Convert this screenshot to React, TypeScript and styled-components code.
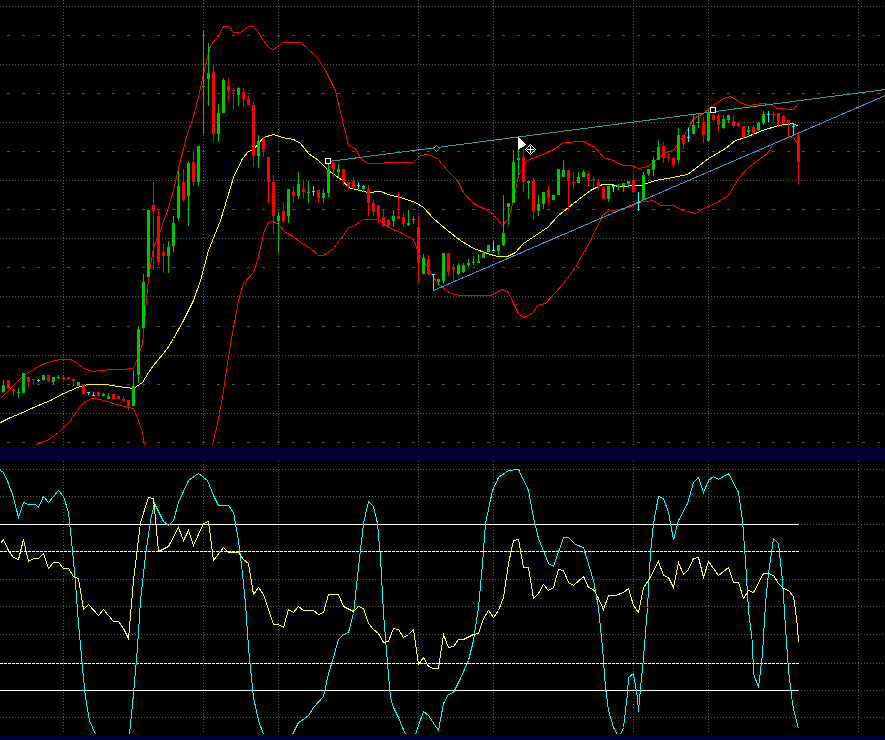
import React from "react";
import styled, { createGlobalStyle } from "styled-components";

type Pt = [number, number];
// wick top, wick bottom, body top, body bottom, colour (g / r / c), one per bar, 5px apart from x=3
type Bar = [number, number, number, number, string];

const GlobalStyle = createGlobalStyle`
  html, body {
    margin: 0;
    padding: 0;
    background: #000;
  }
`;

const Page = styled.div`
  display: flex;
  flex-direction: column;
  width: 885px;
  height: 740px;
  overflow: hidden;
  background: #000;
`;

const PricePane = styled.div`
  height: 445px;
  padding-bottom: 2px;
  background: #000;
`;

const Splitter = styled.div<{ $height: number }>`
  height: ${(p) => p.$height}px;
  background: #000037;
`;

const OscillatorPane = styled.div`
  height: 273px;
  padding-bottom: 2px;
  background: #000;
`;

const ChartSvg = styled.svg`
  display: block;
  shape-rendering: crispEdges;
`;

const Series = styled.polyline<{ $color: string }>`
  fill: none;
  stroke: ${(p) => p.$color};
  stroke-width: 1;
`;

const GridLine = styled.line<{ $sparse?: boolean }>`
  stroke: ${(p) => (p.$sparse ? "#505050" : "#5a5a5a")};
  stroke-width: 1;
  stroke-dasharray: ${(p) => (p.$sparse ? "3 12" : "1 2")};
  stroke-dashoffset: ${(p) => (p.$sparse ? -7 : 0)};
`;

const LevelLine = styled.line<{ $dashed?: boolean }>`
  stroke: #fff;
  stroke-width: 1;
  stroke-dasharray: ${(p) => (p.$dashed ? "3 1" : "none")};
`;

const COLORS: Record<string, string> = { g: "#00c800", r: "#ff0000", c: "#00ffff" };
const TREND_TEAL = "#359fa0";
const TREND_BLUE = "#3a97d0";

const GRID_X = [63, 203, 278, 418, 493, 633, 708, 858];
const PRICE_DOTTED = [6, 64, 122, 180, 238, 296, 355, 413];
const PRICE_SPARSE = [35, 93, 151, 209, 267, 326, 384, 442];
const OSC_GRID = [469, 496, 524, 551, 579, 606, 634, 663, 690, 717];

const BARS: Bar[] = [
  [380, 393, 385, 392, "g"], [380, 389, 380, 388, "r"], [388, 396, 389, 391, "r"], [388, 398, 392, 393, "g"],
  [373, 393, 373, 393, "g"], [377, 387, 377, 382, "r"], [379, 385, 379, 380, "r"], [379, 382, 380, 380, "c"],
  [375, 381, 375, 380, "g"], [375, 382, 375, 381, "r"], [377, 384, 377, 382, "g"], [375, 379, 377, 377, "g"],
  [376, 380, 377, 379, "r"], [377, 380, 377, 379, "r"], [378, 386, 379, 381, "r"], [382, 386, 382, 386, "g"],
  [385, 394, 385, 394, "r"], [392, 395, 392, 392, "c"], [392, 395, 395, 395, "c"], [392, 396, 392, 396, "r"],
  [393, 396, 394, 396, "g"], [393, 399, 396, 399, "g"], [394, 399, 394, 399, "r"], [396, 399, 396, 399, "r"],
  [396, 402, 399, 401, "r"], [400, 410, 400, 406, "r"], [370, 406, 386, 406, "g"], [326, 383, 329, 375, "g"],
  [274, 328, 282, 328, "g"], [210, 277, 210, 277, "g"], [182, 270, 205, 211, "r"], [209, 265, 216, 262, "r"],
  [244, 273, 252, 256, "r"], [241, 273, 247, 256, "g"], [216, 252, 223, 246, "g"], [171, 221, 186, 218, "g"],
  [169, 202, 182, 200, "r"], [161, 226, 163, 196, "g"], [151, 186, 162, 182, "r"], [146, 186, 146, 182, "g"],
  [31, 134, 86, 86, "g"], [43, 106, 73, 79, "g"], [64, 142, 72, 134, "r"], [104, 142, 113, 134, "g"],
  [78, 113, 80, 113, "g"], [78, 101, 86, 91, "r"], [88, 109, 90, 91, "r"], [87, 106, 88, 95, "g"],
  [88, 107, 92, 99, "r"], [95, 105, 99, 105, "r"], [102, 167, 105, 156, "r"], [135, 168, 141, 156, "g"],
  [137, 157, 139, 150, "r"], [157, 203, 157, 182, "r"], [175, 234, 182, 216, "r"], [212, 252, 216, 221, "g"],
  [202, 223, 211, 221, "r"], [189, 223, 189, 216, "g"], [186, 203, 192, 196, "r"], [172, 199, 184, 196, "g"],
  [180, 198, 189, 192, "r"], [181, 203, 192, 192, "g"], [186, 196, 191, 191, "c"], [190, 203, 190, 198, "r"],
  [189, 203, 193, 198, "g"], [164, 197, 169, 193, "g"], [162, 178, 162, 169, "r"], [164, 177, 169, 172, "g"],
  [169, 186, 169, 182, "r"], [182, 190, 182, 187, "r"], [177, 190, 181, 187, "r"], [182, 189, 185, 185, "c"],
  [185, 192, 186, 189, "g"], [185, 216, 189, 203, "r"], [199, 216, 203, 212, "r"], [205, 223, 205, 217, "r"],
  [210, 227, 217, 226, "r"], [219, 227, 220, 226, "r"], [210, 227, 216, 221, "g"], [192, 219, 216, 219, "r"],
  [213, 227, 217, 224, "r"], [210, 226, 223, 225, "g"], [216, 224, 219, 219, "g"], [216, 283, 227, 263, "r"],
  [254, 274, 258, 274, "g"], [255, 275, 259, 274, "r"], [274, 290, 274, 274, "c"], [279, 285, 279, 282, "g"],
  [253, 284, 253, 281, "g"], [253, 276, 253, 272, "r"], [264, 281, 267, 270, "r"], [263, 275, 265, 274, "g"],
  [263, 273, 265, 272, "g"], [259, 267, 263, 265, "g"], [256, 265, 262, 262, "g"], [254, 263, 261, 263, "g"],
  [251, 258, 253, 258, "g"], [245, 252, 245, 252, "g"], [241, 251, 250, 250, "c"], [245, 255, 245, 251, "g"],
  [195, 246, 233, 245, "g"], [203, 225, 203, 207, "g"], [150, 203, 162, 203, "g"], [150, 175, 158, 160, "g"],
  [148, 192, 157, 182, "r"], [181, 199, 181, 183, "g"], [178, 220, 181, 211, "r"], [195, 216, 204, 211, "g"],
  [192, 209, 192, 204, "g"], [186, 205, 190, 198, "r"], [195, 200, 195, 200, "g"], [169, 195, 169, 195, "g"],
  [160, 177, 170, 177, "g"], [170, 211, 170, 181, "r"], [172, 189, 182, 182, "r"], [172, 183, 177, 183, "g"],
  [170, 177, 172, 177, "g"], [171, 186, 174, 181, "r"], [177, 188, 179, 179, "r"], [179, 190, 182, 187, "r"],
  [187, 199, 187, 199, "r"], [186, 202, 186, 199, "g"], [184, 192, 186, 186, "c"], [184, 190, 186, 186, "g"],
  [183, 192, 183, 186, "g"], [181, 188, 181, 184, "g"], [175, 192, 180, 192, "r"], [192, 211, 202, 202, "c"],
  [172, 200, 175, 200, "g"], [169, 176, 169, 174, "g"], [157, 176, 160, 170, "g"], [140, 160, 147, 160, "g"],
  [142, 163, 146, 158, "r"], [153, 162, 157, 157, "r"], [157, 167, 158, 165, "r"], [128, 164, 135, 160, "g"],
  [135, 148, 135, 144, "r"], [128, 142, 137, 137, "c"], [115, 134, 125, 134, "g"], [114, 128, 122, 122, "g"],
  [117, 143, 122, 135, "r"], [109, 142, 112, 141, "g"], [110, 121, 115, 120, "r"], [114, 132, 116, 125, "r"],
  [115, 129, 119, 128, "g"], [115, 123, 115, 120, "g"], [115, 128, 121, 126, "r"], [122, 127, 123, 126, "r"],
  [126, 139, 126, 137, "r"], [126, 135, 130, 132, "g"], [125, 137, 127, 133, "r"], [122, 131, 123, 130, "g"],
  [111, 125, 114, 123, "g"], [111, 122, 114, 114, "c"], [112, 120, 114, 114, "r"], [113, 127, 113, 121, "r"],
  [115, 124, 116, 123, "r"], [120, 136, 120, 123, "r"], [123, 135, 126, 126, "c"], [133, 184, 135, 162, "r"],
];

const UPPER_A: Pt[] = [
  [0, 398], [10, 388], [23, 375], [38, 366], [50, 361], [60, 359], [70, 359], [77, 363], [83, 368], [92, 371],
  [110, 369], [120, 369], [133, 368], [137, 358], [142, 343], [148, 278], [153, 248], [160, 230], [168, 207],
  [173, 190], [178, 168], [183, 148], [188, 130], [193, 117], [198, 97], [203, 73], [207, 57], [210, 45],
  [217, 37], [223, 26], [228, 26], [233, 32], [240, 32], [248, 26], [253, 26], [258, 32], [263, 40], [268, 47],
  [273, 49], [283, 42], [292, 42], [300, 42], [315, 55], [325, 70], [335, 90], [342, 120], [348, 145], [355, 148],
  [360, 158], [367, 163], [380, 163], [388, 162], [413, 162], [420, 155], [428, 154], [437, 158], [447, 170],
  [457, 180], [463, 192], [473, 203], [483, 208], [492, 213], [502, 225], [508, 218], [513, 200], [518, 175],
  [527, 160], [545, 153], [555, 148], [563, 142], [583, 141], [595, 147], [603, 157], [613, 160], [622, 165],
  [630, 165], [638, 168], [648, 166], [657, 158], [665, 152], [673, 150], [680, 140], [688, 128], [693, 118],
  [703, 113], [713, 105], [723, 98], [730, 96], [742, 103], [748, 105], [762, 103], [770, 104], [777, 108],
  [793, 109], [798, 103],
];

const LOWER_LEFT: Pt[] = [
  [36, 444], [47, 440], [58, 432], [70, 420], [77, 410], [83, 402], [92, 398], [100, 399], [113, 403],
  [128, 407], [133, 408], [138, 420], [142, 432], [144, 445],
];

const LOWER_RIGHT: Pt[] = [
  [212, 445], [217, 423], [222, 397], [227, 363], [232, 333], [238, 300], [243, 283], [253, 272], [257, 260],
  [260, 248], [263, 233], [268, 222], [273, 221], [278, 224], [285, 232], [293, 236], [300, 242], [310, 248],
  [318, 255], [323, 255], [333, 248], [343, 235], [348, 227], [353, 226], [363, 219], [378, 219], [388, 227],
  [400, 232], [413, 239], [418, 252], [427, 267], [437, 283], [450, 293], [460, 295], [490, 295], [502, 289],
  [508, 292], [513, 303], [518, 313], [523, 317], [532, 313], [537, 305], [545, 303], [563, 283], [575, 267],
  [590, 240], [602, 215], [607, 211], [628, 207], [638, 202], [653, 200], [660, 205], [673, 205], [682, 210],
  [695, 213], [703, 208], [715, 203], [728, 195], [738, 178], [748, 167], [767, 153], [773, 143], [787, 137],
  [793, 137], [798, 145],
];

const MIDDLE: Pt[] = [
  [0, 422], [10, 417], [20, 413], [33, 407], [50, 400], [63, 393], [77, 387], [87, 384], [105, 384], [118, 386],
  [133, 388], [142, 382], [148, 372], [153, 365], [167, 348], [173, 338], [183, 320], [193, 300], [200, 280],
  [208, 250], [220, 220], [227, 197], [233, 177], [242, 158], [248, 151], [253, 149], [263, 137], [273, 134],
  [282, 137], [293, 139], [300, 143], [308, 153], [318, 160], [328, 170], [342, 180], [348, 187], [367, 192],
  [380, 191], [388, 194], [403, 198], [415, 202], [423, 207], [433, 218], [447, 230], [460, 240], [473, 248],
  [487, 253], [497, 256], [507, 256], [515, 252], [523, 243], [547, 227], [558, 215], [568, 207], [582, 196],
  [590, 190], [602, 184], [610, 184], [618, 186], [640, 185], [655, 180], [672, 177], [687, 174], [695, 168],
  [708, 158], [725, 148], [735, 140], [745, 137], [762, 130], [778, 125], [793, 123], [798, 126],
];

const OSC_CYAN: Pt[] = [
  [0, 470], [3, 472], [8, 483], [13, 497], [18, 517], [23, 502], [28, 504], [35, 504], [38, 507], [43, 496],
  [48, 502], [58, 490], [63, 496], [68, 512], [72, 550], [75, 583], [78, 623], [82, 667], [85, 697], [89, 720],
  [95, 734], [129, 734], [133, 693], [137, 647], [140, 600], [145, 555], [150, 520], [154, 503], [160, 515],
  [163, 521], [168, 525], [173, 520], [178, 502], [188, 480], [198, 473], [207, 480], [213, 495], [218, 505],
  [228, 505], [233, 512], [238, 540], [242, 573], [245, 603], [248, 647], [253, 697], [258, 720], [263, 734],
  [292, 734], [298, 722], [300, 721], [308, 715], [313, 707], [323, 696], [328, 673], [333, 657], [338, 639],
  [343, 634], [348, 632], [353, 613], [358, 567], [363, 523], [368, 501], [373, 506], [377, 523], [380, 557],
  [383, 613], [387, 663], [390, 697], [393, 707], [398, 717], [405, 734], [415, 734], [418, 725], [423, 711],
  [428, 715], [438, 730], [443, 703], [448, 694], [453, 692], [460, 678], [468, 660], [473, 640], [478, 607],
  [482, 563], [485, 523], [492, 490], [498, 477], [508, 470], [518, 469], [528, 490], [533, 517], [538, 538],
  [548, 563], [553, 566], [563, 537], [568, 537], [575, 544], [583, 547], [593, 580], [598, 607], [602, 647],
  [605, 687], [608, 710], [613, 727], [617, 734], [620, 734], [623, 727], [627, 693], [628, 677], [633, 673],
  [637, 698], [638, 711], [640, 688], [643, 657], [647, 607], [650, 553], [653, 523], [658, 496], [663, 498],
  [668, 512], [673, 539], [678, 520], [687, 503], [693, 482], [698, 477], [703, 492], [708, 480], [713, 476],
  [718, 479], [728, 473], [738, 492], [742, 520], [745, 560], [748, 610], [752, 643], [753, 673], [758, 687],
  [762, 653], [765, 603], [768, 573], [773, 538], [778, 543], [782, 580], [785, 627], [788, 670], [792, 703],
  [795, 717], [798, 728],
];

const OSC_YELLOW: Pt[] = [
  [0, 543], [3, 539], [8, 550], [13, 557], [18, 559], [23, 539], [28, 561], [33, 558], [38, 558], [43, 553],
  [48, 568], [53, 562], [58, 562], [63, 568], [68, 568], [73, 576], [78, 578], [83, 609], [88, 604], [98, 615],
  [103, 609], [113, 621], [118, 621], [123, 628], [128, 638], [133, 580], [140, 522], [148, 497], [153, 498],
  [158, 551], [168, 546], [178, 527], [183, 540], [188, 530], [193, 545], [203, 523], [208, 521], [213, 560],
  [223, 547], [228, 552], [238, 552], [243, 559], [248, 563], [253, 594], [258, 587], [263, 594], [273, 624],
  [278, 624], [283, 627], [288, 609], [293, 612], [298, 606], [303, 610], [313, 610], [318, 614], [323, 612],
  [328, 594], [338, 594], [343, 606], [353, 611], [358, 606], [363, 608], [368, 623], [373, 629], [378, 633],
  [383, 642], [388, 641], [393, 628], [398, 629], [403, 637], [408, 634], [413, 629], [418, 664], [423, 657],
  [428, 666], [433, 668], [438, 668], [443, 634], [448, 647], [453, 646], [458, 639], [463, 639], [473, 634],
  [478, 633], [483, 618], [488, 610], [493, 617], [498, 610], [503, 597], [508, 563], [513, 540], [518, 539],
  [523, 567], [528, 567], [533, 598], [538, 593], [543, 584], [548, 590], [553, 587], [558, 569], [563, 570],
  [568, 582], [573, 585], [583, 576], [588, 587], [593, 589], [598, 598], [603, 609], [608, 595], [615, 595],
  [623, 592], [628, 588], [633, 605], [638, 612], [643, 587], [648, 580], [658, 561], [663, 575], [668, 577],
  [673, 587], [678, 562], [683, 574], [688, 569], [693, 558], [698, 557], [703, 577], [708, 561], [713, 568],
  [718, 575], [728, 567], [733, 582], [738, 582], [743, 598], [748, 590], [753, 592], [763, 573], [768, 573],
  [773, 575], [778, 583], [783, 588], [788, 590], [793, 596], [795, 610], [797, 627], [798, 642],
];

const toPoints = (pts: Pt[]) => pts.map(([x, y]) => `${x + 0.5},${y + 0.5}`).join(" ");

function Candle({ x, bar }: { x: number; bar: Bar }) {
  const [high, low, top, bottom, kind] = bar;
  const color = COLORS[kind];
  return (
    <g fill={color}>
      <rect x={x} y={high} width={1} height={low - high} />
      <rect x={x - 1} y={top} width={3} height={Math.max(1, bottom - top)} />
    </g>
  );
}

function Anchor({ x, y }: { x: number; y: number }) {
  return <rect x={x - 2.5} y={y - 2.5} width={5} height={5} fill="#000" stroke="#fff" />;
}

function PriceChart() {
  return (
    <ChartSvg width={885} height={445} viewBox="0 0 885 445">
      {PRICE_DOTTED.map((y) => (
        <GridLine key={y} x1={0} x2={885} y1={y + 0.5} y2={y + 0.5} />
      ))}
      {PRICE_SPARSE.map((y) => (
        <GridLine key={y} $sparse x1={0} x2={885} y1={y + 0.5} y2={y + 0.5} />
      ))}
      {GRID_X.map((x) => (
        <GridLine key={x} x1={x + 0.5} x2={x + 0.5} y1={0} y2={445} />
      ))}
      <Series $color="#ff0000" points={toPoints(UPPER_A)} />
      <Series $color="#ff0000" points={toPoints(LOWER_LEFT)} />
      <Series $color="#ff0000" points={toPoints(LOWER_RIGHT)} />
      <Series $color="#ffff00" points={toPoints(MIDDLE)} />
      <Series $color={TREND_TEAL} points={toPoints([[328, 161], [885, 89]])} />
      <Series $color={TREND_BLUE} points={toPoints([[433, 290], [885, 95]])} />
      {BARS.map((bar, i) => (
        <Candle key={i} x={3 + i * 5} bar={bar} />
      ))}
      <polygon points="436.5,145.5 439.5,148.5 436.5,151.5 433.5,148.5" fill="#000" stroke={TREND_TEAL} />
      <Anchor x={328} y={161} />
      <Anchor x={713} y={110} />
      {/* mouse pointer and the drag cursor next to it */}
      <polygon points="518,137 518,150 526,145" fill="#fff" />
      <g stroke="#fff" fill="none">
        <polygon points="530.5,144.5 535.5,149.5 530.5,154.5 525.5,149.5" />
        <line x1={530.5} y1={146} x2={530.5} y2={153} />
        <line x1={527} y1={149.5} x2={534} y2={149.5} />
      </g>
    </ChartSvg>
  );
}

function OscillatorChart() {
  return (
    <ChartSvg width={885} height={273} viewBox="0 461 885 273">
      {OSC_GRID.map((y) => (
        <GridLine key={y} x1={0} x2={885} y1={y + 0.5} y2={y + 0.5} />
      ))}
      {GRID_X.map((x) => (
        <GridLine key={x} x1={x + 0.5} x2={x + 0.5} y1={461} y2={734} />
      ))}
      <LevelLine x1={0} x2={799} y1={524.5} y2={524.5} />
      <LevelLine $dashed x1={0} x2={799} y1={551.5} y2={551.5} />
      <LevelLine $dashed x1={0} x2={799} y1={663.5} y2={663.5} />
      <LevelLine x1={0} x2={799} y1={690.5} y2={690.5} />
      <Series $color="#00ffff" points={toPoints(OSC_CYAN)} />
      <Series $color="#ffff40" points={toPoints(OSC_YELLOW)} />
    </ChartSvg>
  );
}

export default function App() {
  return (
    <>
      <GlobalStyle />
      <Page>
        <PricePane>
          <PriceChart />
        </PricePane>
        <Splitter $height={14} />
        <OscillatorPane>
          <OscillatorChart />
        </OscillatorPane>
        <Splitter $height={4} />
      </Page>
    </>
  );
}
